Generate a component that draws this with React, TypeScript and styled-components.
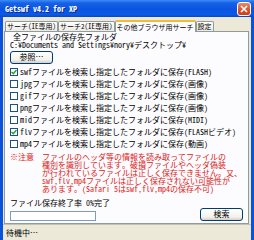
import React from "react";
import styled, { createGlobalStyle } from "styled-components";

const GlobalStyle = createGlobalStyle`
  html, body {
    margin: 0;
    padding: 0;
    background: #ffffff;
  }
  body {
    font-family: "Noto Sans Mono CJK JP", "Noto Sans CJK JP", "DejaVu Sans Mono", monospace;
    font-size: 8px;
    line-height: 1;
  }
`;

const Window = styled.div`
  width: 254px;
  height: 240px;
  display: flex;
  flex-direction: column;
  background: #0a53e0;
  overflow: hidden;
`;

const TitleBar = styled.div`
  height: 17px;
  flex: none;
  display: flex;
  align-items: center;
  justify-content: space-between;
  padding: 0 3px 0 5px;
  background: linear-gradient(
    to bottom,
    #3d8bf5 0%,
    #1761e6 18%,
    #0a54e1 55%,
    #0b5ae6 85%,
    #0847c7 100%
  );
`;

const Title = styled.span`
  color: #ffffff;
  font-weight: bold;
  font-size: 8px;
  text-shadow: 1px 1px 0 #0a2a8a;
`;

const CloseButton = styled.div`
  width: 12px;
  height: 12px;
  border: 1px solid #ffffff;
  border-radius: 3px;
  background: linear-gradient(to bottom, #e98a6a, #d6502b 60%, #c9401c);
  display: flex;
  align-items: center;
  justify-content: center;
`;

const Client = styled.div`
  flex: 1;
  margin: 0 3px;
  background: #ece9d8;
  display: flex;
  flex-direction: column;
  min-height: 0;
`;

const TabArea = styled.div`
  flex: 1;
  min-height: 0;
  display: flex;
  flex-direction: column;
  padding: 2px 2px 0 1px;
`;

const TabStrip = styled.div`
  display: flex;
  align-items: flex-end;
  height: 12px;
  padding-left: 1px;
`;

const Tab = styled.div<{ $active?: boolean }>`
  height: ${(p) => (p.$active ? "12px" : "10px")};
  padding: 0 1px;
  display: flex;
  align-items: center;
  box-sizing: border-box;
  font-size: 7px;
  border: 1px solid #919b9c;
  border-bottom: none;
  border-top: ${(p) => (p.$active ? "2px solid #f7b93a" : "1px solid #919b9c")};
  border-radius: 2px 2px 0 0;
  background: ${(p) =>
    p.$active ? "#fcfcfe" : "linear-gradient(to bottom, #ffffff, #ecebe5)"};
  margin-bottom: ${(p) => (p.$active ? "-1px" : "0")};
  position: relative;
  z-index: ${(p) => (p.$active ? 2 : 1)};
  white-space: nowrap;
  color: #000000;
`;

const Panel = styled.div`
  flex: 1;
  min-height: 0;
  border: 1px solid #919b9c;
  background: #fcfcfe;
  padding: 1px 5px 2px 5px;
  display: flex;
  flex-direction: column;
`;

const Label = styled.div`
  height: 10px;
  padding-left: 3px;
  display: flex;
  align-items: center;
  white-space: nowrap;
`;

const PathLine = styled.div`
  height: 10px;
  display: flex;
  align-items: center;
  white-space: nowrap;
`;

const XPButton = styled.div<{ $w: number }>`
  width: ${(p) => p.$w}px;
  height: 13px;
  flex: none;
  box-sizing: border-box;
  margin-top: 1px;
  border: 1px solid #003c74;
  border-radius: 3px;
  background: linear-gradient(to bottom, #ffffff, #f3f2ec 70%, #d6d0c5);
  display: flex;
  align-items: center;
  justify-content: center;
  color: #000000;
`;

const CheckList = styled.div`
  margin-top: 2px;
  display: flex;
  flex-direction: column;
`;

const CheckRow = styled.div`
  height: 12px;
  display: flex;
  align-items: center;
  gap: 2px;
  white-space: nowrap;
`;

const Box = styled.span`
  width: 8px;
  height: 8px;
  box-sizing: border-box;
  border: 1px solid #1c5180;
  background: #ffffff;
  display: flex;
  align-items: center;
  justify-content: center;
  flex: none;
`;

const Note = styled.div`
  margin-top: 3px;
  display: flex;
  color: #dd2020;
`;

const NoteMark = styled.div`
  width: 32px;
  flex: none;
  height: 8px;
  white-space: nowrap;
`;

const NoteBody = styled.div`
  display: flex;
  flex-direction: column;
  white-space: nowrap;
`;

const NoteLine = styled.span`
  height: 8px;
  line-height: 8px;
`;

const ProgressLabel = styled.div`
  margin-top: 6px;
  height: 10px;
  display: flex;
  align-items: center;
`;

const BottomRow = styled.div`
  display: flex;
  justify-content: space-between;
  align-items: flex-end;
`;

const ProgressBox = styled.div`
  width: 86px;
  height: 10px;
  box-sizing: border-box;
  border: 1px solid #7f9db9;
  background: #ffffff;
`;

const StatusBar = styled.div`
  height: 15px;
  flex: none;
  border-top: 1px solid #c5c2b2;
  display: flex;
  align-items: center;
  padding-left: 3px;
  background: #ece9d8;
`;

const Check = () => (
  <svg width="6" height="6" viewBox="0 0 6 6">
    <path d="M0.5 3 L2.3 4.8 L5.5 1" stroke="#21a121" strokeWidth="1.4" fill="none" />
  </svg>
);

const items = [
  { ext: "swf", kind: "(FLASH)", on: true },
  { ext: "jpg", kind: "(画像)", on: false },
  { ext: "gif", kind: "(画像)", on: false },
  { ext: "png", kind: "(画像)", on: false },
  { ext: "mid", kind: "(MIDI)", on: false },
  { ext: "flv", kind: "(FLASHビデオ)", on: true },
  { ext: "mp4", kind: "(動画)", on: false },
];

const notes = [
  "ファイルのヘッダ等の情報を読み取ってファイルの",
  "種別を識別しています。破損ファイルやヘッダ偽装",
  "が行われているファイルは正しく保存できません。又、",
  "swf,flv,mp4ファイルは正しく保存されない可能性が",
  "あります。(Safari 5はswf,flv,mp4の保存不可)",
];

export default function App() {
  return (
    <Window>
      <GlobalStyle />
      <TitleBar>
        <Title>Getswf v4.2 for XP</Title>
        <CloseButton>
          <svg width="8" height="8" viewBox="0 0 8 8">
            <path d="M1 1 L7 7 M7 1 L1 7" stroke="#ffffff" strokeWidth="1.6" />
          </svg>
        </CloseButton>
      </TitleBar>
      <Client>
        <TabArea>
          <TabStrip>
            <Tab>サーチ(IE専用)</Tab>
            <Tab>サーチ2(IE専用)</Tab>
            <Tab $active>その他ブラウザ用サーチ</Tab>
            <Tab>設定</Tab>
          </TabStrip>
          <Panel>
            <Label>全ファイルの保存先フォルダ</Label>
            <PathLine>C:¥Documents and Settings¥nory¥デスクトップ¥</PathLine>
            <XPButton $w={43}>参照…</XPButton>
            <CheckList>
              {items.map((it) => (
                <CheckRow key={it.ext}>
                  <Box>{it.on && <Check />}</Box>
                  <span>
                    {it.ext}ファイルを検索し指定したフォルダに保存{it.kind}
                  </span>
                </CheckRow>
              ))}
            </CheckList>
            <Note>
              <NoteMark>※注意</NoteMark>
              <NoteBody>
                {notes.map((n) => (
                  <NoteLine key={n}>{n}</NoteLine>
                ))}
              </NoteBody>
            </Note>
            <ProgressLabel>ファイル保存終了率 0%完了</ProgressLabel>
            <BottomRow>
              <ProgressBox />
              <XPButton $w={43}>検索</XPButton>
            </BottomRow>
          </Panel>
        </TabArea>
        <StatusBar>待機中…</StatusBar>
      </Client>
    </Window>
  );
}
